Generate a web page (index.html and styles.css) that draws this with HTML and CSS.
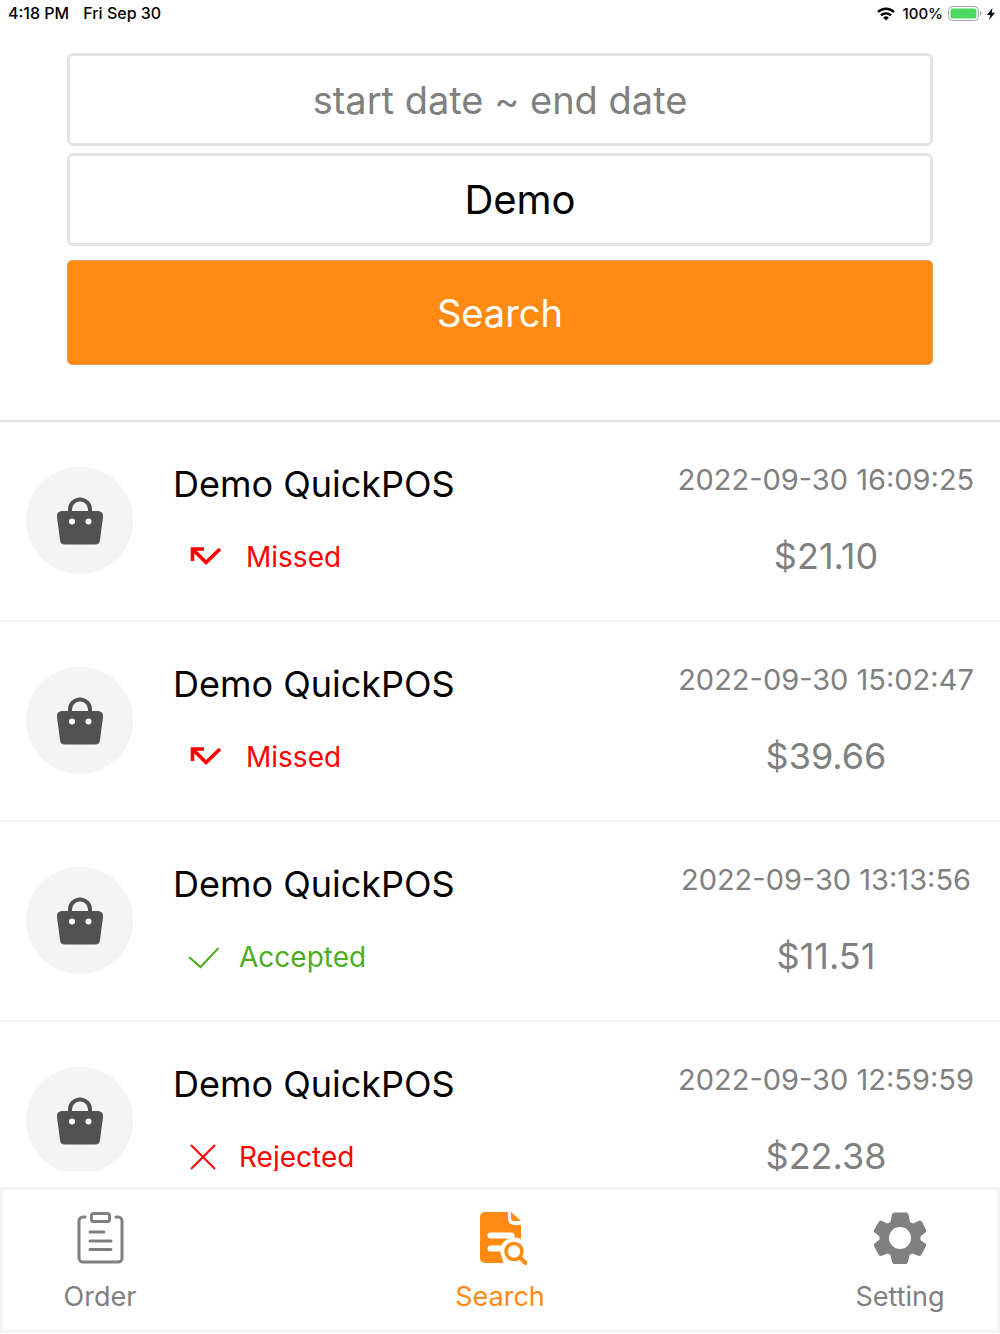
FILE: index.html
```
<!DOCTYPE html>
<html lang="en">
<head>
    <meta charset="UTF-8">
    <meta name="viewport" content="width=device-width, initial-scale=1.0">
    <title>QuickPOS - Search</title>
    <link rel="stylesheet" href="styles.css">
</head>
<body>
    <!-- shared icons -->
    <svg class="sprite" aria-hidden="true">
        <symbol id="bag" viewBox="0 0 46 48">
            <path d="M13 16v-3.500a10 10 0 0 1 20 0V16" fill="none" stroke="#515151" stroke-width="4"/>
            <path d="M5 14h36a5 5 0 0 1 5 6l-3 23a5 5 0 0 1-5 4.500H8a5 5 0 0 1-5-4.500L0 20a5 5 0 0 1 5-6z" fill="#515151"/>
            <circle cx="15" cy="24.500" r="3" fill="#fff"/>
            <circle cx="31.500" cy="24.500" r="3" fill="#fff"/>
        </symbol>
        <symbol id="missed" viewBox="0 0 38 30">
            <path d="M16 7H4.500v12M5.500 8l12.500 12.500L32 7" fill="none" stroke="#f00" stroke-width="3.600"/>
        </symbol>
    </svg>

    <div class="app">
        <header class="status-bar">
            <div class="status-left">
                <span>4:18 PM</span>
                <span>Fri Sep 30</span>
            </div>
            <div class="status-right">
                <svg width="18" height="14" viewBox="0 0 18 14">
                    <g fill="none" stroke="#000" stroke-width="2.400">
                        <path d="M1 5a11.500 11.500 0 0 1 16 0"/>
                        <path d="M4 8.400a7.200 7.200 0 0 1 10 0"/>
                    </g>
                    <path d="M9 13.500L6.200 10.700a4 4 0 0 1 5.600 0z"/>
                </svg>
                <span>100%</span>
                <svg width="34" height="15" viewBox="0 0 34 15">
                    <rect x="0.500" y="0.500" width="30" height="14" rx="4" fill="#fff" stroke="#a5a5a5"/>
                    <rect x="2.500" y="2.500" width="26" height="10" rx="2" fill="#4cd964"/>
                    <path d="M32 5v5q1.500-1 1.500-2.500T32 5z" fill="#a5a5a5"/>
                </svg>
                <svg width="8" height="12" viewBox="0 0 8 12">
                    <path d="M5.500 0L0 7h3.400L2 12l6-7.200H4.600z"/>
                </svg>
            </div>
        </header>

        <form class="search-form" onsubmit="return false">
            <input class="field" type="text" aria-label="Date range" placeholder="start date ~ end date">
            <input class="field store" type="text" aria-label="Store" value="Demo">
            <button class="search-button" type="submit">Search</button>
        </form>

        <main class="orders">
            <article class="order">
                <div class="avatar"><svg width="46" height="48"><use href="#bag"/></svg></div>
                <div class="info">
                    <h2>Demo QuickPOS</h2>
                    <p class="state missed"><svg width="38" height="30"><use href="#missed"/></svg>Missed</p>
                </div>
                <div class="detail">
                    <time>2022-09-30 16:09:25</time>
                    <span class="price">$21.10</span>
                </div>
            </article>
            <article class="order">
                <div class="avatar"><svg width="46" height="48"><use href="#bag"/></svg></div>
                <div class="info">
                    <h2>Demo QuickPOS</h2>
                    <p class="state missed"><svg width="38" height="30"><use href="#missed"/></svg>Missed</p>
                </div>
                <div class="detail">
                    <time>2022-09-30 15:02:47</time>
                    <span class="price">$39.66</span>
                </div>
            </article>
            <article class="order">
                <div class="avatar"><svg width="46" height="48"><use href="#bag"/></svg></div>
                <div class="info">
                    <h2>Demo QuickPOS</h2>
                    <p class="state accepted">
                        <svg width="31" height="30" viewBox="0 0 31 30"><path d="M1 15l11.500 10L30.500 6" fill="none" stroke="currentColor" stroke-width="2"/></svg>Accepted
                    </p>
                </div>
                <div class="detail">
                    <time>2022-09-30 13:13:56</time>
                    <span class="price">$11.51</span>
                </div>
            </article>
            <article class="order">
                <div class="avatar"><svg width="46" height="48"><use href="#bag"/></svg></div>
                <div class="info">
                    <h2>Demo QuickPOS</h2>
                    <p class="state rejected">
                        <svg width="31" height="30" viewBox="0 0 31 30"><path d="M3 3l24 24M27 3L3 27" fill="none" stroke="currentColor" stroke-width="2"/></svg>Rejected
                    </p>
                </div>
                <div class="detail">
                    <time>2022-09-30 12:59:59</time>
                    <span class="price">$22.38</span>
                </div>
            </article>
        </main>

        <nav class="tab-bar">
            <a class="tab" href="#order">
                <svg width="54" height="54" viewBox="0 0 54 54" fill="none" stroke="currentColor" stroke-width="3" stroke-linecap="round">
                    <path d="M12 6H10a4 4 0 0 0-4 4v37a4 4 0 0 0 4 4h35a4 4 0 0 0 4-4V10a4 4 0 0 0-4-4h-2"/>
                    <rect x="18.500" y="2.500" width="18" height="8" rx="2"/>
                    <path d="M17 21h14M17 30h21M17 38.500h21"/>
                </svg>
                Order
            </a>
            <a class="tab active" href="#search">
                <svg width="54" height="54" viewBox="0 0 54 54">
                    <path d="M12 1h23v7a6 6 0 0 0 6 6h7v35a3 3 0 0 1-3 3H12a5 5 0 0 1-5-5V6a5 5 0 0 1 5-5z" fill="currentColor"/>
                    <path d="M38 1l10 9h-7a3 3 0 0 1-3-3z" fill="currentColor"/>
                    <path d="M17.500 24.500h21M17.500 37.500h14" stroke="#fff" stroke-width="6" stroke-linecap="round"/>
                    <path d="M27 40a14 14 0 0 1 22-11v25H31z" fill="#fff"/>
                    <circle cx="41" cy="40" r="13" fill="#fff"/>
                    <circle cx="41" cy="40.500" r="8" fill="#fff" stroke="currentColor" stroke-width="3.500"/>
                    <path d="M47 46.500l5.500 5.500" stroke="currentColor" stroke-width="4" stroke-linecap="round"/>
                </svg>
                Search
            </a>
            <a class="tab" href="#setting">
                <svg width="54" height="54" viewBox="0 0 54 54">
                    <path d="M21 1.500h13l1.500 2L37 11l3 1.500L46.500 9.500l2.500 1L53 19v2l-5.500 4.500v3.500L53 33v2l-5 9.500-2 .5-6.500-2.500-3 1.500L35 51l-1.500 2h-13L19 51l-1.500-7-3-1.500L8 45l-2-.5L1 35v-2l5.500-4.500v-3L1 21v-2l5-8.500 2-1 6.500 3 3-1.500L19 3z" fill="currentColor"/>
                    <circle cx="27" cy="27" r="11" fill="#fff"/>
                </svg>
                Setting
            </a>
        </nav>
    </div>
</body>
</html>
```
FILE: styles.css
```
* {
    box-sizing: border-box;
}

body {
    margin: 0;
    font-family: Inter, Roboto, sans-serif;
    background-color: #fff;
    color: #000;
}

.sprite {
    position: absolute;
    width: 0;
    height: 0;
}

.app {
    height: 100vh;
    display: flex;
    flex-direction: column;
    padding-bottom: 1px;
}

.status-bar {
    display: flex;
    justify-content: space-between;
    padding: 0 5px 0 8px;
    font-size: 16px;
    font-weight: 500;
    line-height: 27px;
}

.status-left {
    display: flex;
    gap: 14px;
}

.status-right {
    display: flex;
    align-items: center;
    gap: 5px;
}

.status-right span {
    font-size: 15px;
    padding-left: 3px;
}

/* search form */
.search-form {
    display: flex;
    flex-direction: column;
    padding: 26px 67px 55px;
    border-bottom: 2px solid #e2e2e2;
}

.field {
    width: 100%;
    height: 93px;
    margin: 0 0 7px;
    padding: 0;
    border: 3px solid #e4e4e4;
    border-radius: 6px;
    background-color: #fff;
    color: #000;
    font-family: inherit;
    font-size: 38px;
    text-align: center;
    outline: none;
}

.field::placeholder {
    color: #808080;
}

.store {
    margin-bottom: 14px;
    padding-left: 40px;
    font-size: 40px;
}

.search-button {
    height: 105px;
    padding: 0;
    border: 1px solid #e0a060;
    border-radius: 5px;
    background-color: #ff8a12;
    color: #fff;
    font-family: inherit;
    font-size: 38px;
    cursor: pointer;
}

/* order list */
.orders {
    flex: 1;
    min-height: 0;
    margin-bottom: 16px;
    overflow: hidden;
}

.order {
    display: grid;
    grid-template-columns: 107px 1fr 348px;
    height: 200px;
    padding-left: 26px;
    border-bottom: 2px solid #f4f4f4;
}

.avatar {
    display: flex;
    align-items: center;
    justify-content: center;
    width: 107px;
    height: 107px;
    margin-top: 45px;
    border-radius: 50%;
    background-color: #f4f4f4;
}

.info {
    padding: 38px 0 0 40px;
}

.info h2 {
    margin: 0;
    font-size: 36px;
    font-weight: 400;
    line-height: 48px;
}

.state {
    display: flex;
    align-items: center;
    gap: 20px;
    margin: 29px 0 0 15px;
    font-size: 28px;
    line-height: 40px;
}

.missed,
.rejected {
    color: #f00;
}

.accepted {
    color: #4cae22;
}

.detail {
    display: flex;
    flex-direction: column;
    align-items: center;
    padding-top: 38px;
    color: #808080;
}

.detail time {
    font-size: 29px;
    line-height: 40px;
}

.price {
    margin-top: 32px;
    font-size: 36px;
    line-height: 48px;
}

/* bottom tabs */
.tab-bar {
    display: flex;
    justify-content: space-between;
    height: 146px;
    border: 3px solid #f4f4f4;
}

.tab {
    display: flex;
    flex-direction: column;
    align-items: center;
    width: 194px;
    padding-top: 21px;
    color: #808080;
    font-size: 27px;
    line-height: 40px;
    text-decoration: none;
}

.tab svg {
    margin-bottom: 12px;
}

.tab.active {
    color: #ff8a12;
}
```
